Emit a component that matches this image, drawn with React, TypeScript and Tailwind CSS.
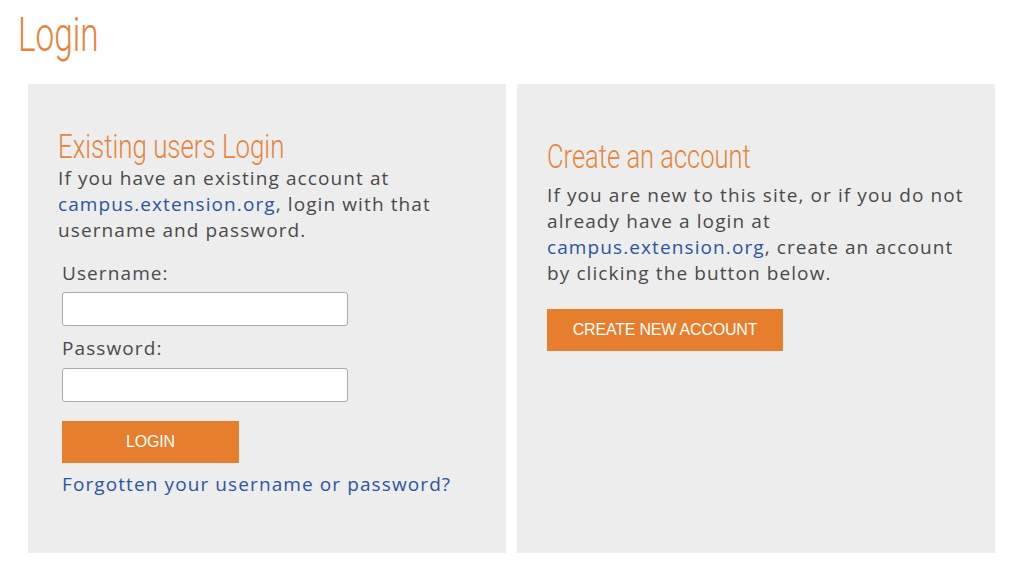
export default function App() {
  const body = "font-['Open_Sans',sans-serif] text-[19px] leading-[26px] tracking-[1.1px]";
  const headFont = "font-['Roboto',sans-serif] font-light text-[#e8833a] whitespace-nowrap";
  return (
    <div className="w-[1024px] h-[583px] bg-white overflow-hidden">
      <div className="h-[84px] pl-[18px] pt-[7px]">
        <h1 className={`${headFont} text-[49px] leading-[56px] h-[56px]`}>
          <span className="inline-block origin-left scale-x-[0.68]">Login</span>
        </h1>
      </div>
      <div className="flex gap-[11px] pl-[28px]">
        <div className="w-[478px] h-[469px] bg-[#ededed] pl-[30px] pt-[43px]">
          <h2 className={`${headFont} text-[34px] leading-[38px] h-[38px]`}>
            <span className="inline-block origin-left scale-x-[0.76]">Existing users Login</span>
          </h2>
          <p className={`${body} text-[#4a4a4a] w-[400px]`}>
            If you have an existing account at <span className="text-[#2c55a0]">campus.extension.org</span>, login with that username and password.
          </p>
          <div className="pl-[4px] pt-[17px]">
            <label className={`${body} text-[#4a4a4a] block`}>Username:</label>
            <input className="mt-[6px] block w-[286px] h-[34px] bg-white border border-[#a9a9a9] rounded-[3px]" />
            <label className={`${body} text-[#4a4a4a] block mt-[9px]`}>Password:</label>
            <input type="password" className="mt-[7px] block w-[286px] h-[34px] bg-white border border-[#a9a9a9] rounded-[3px]" />
            <button className="mt-[19px] block w-[177px] h-[42px] bg-[#e67e2e] text-white font-['Liberation_Sans',Arial,sans-serif] text-[16px] tracking-[-0.2px]">LOGIN</button>
            <p className={`${body} mt-[8px] text-[#2c55a0]`}>Forgotten your username or password?</p>
          </div>
        </div>
        <div className="w-[478px] h-[469px] bg-[#ededed] pl-[30px] pt-[53px]">
          <h2 className={`${headFont} text-[34px] leading-[38px] h-[38px]`}>
            <span className="inline-block origin-left scale-x-[0.75]">Create an account</span>
          </h2>
          <p className={`${body} text-[#4a4a4a] w-[425px] mt-[7px]`}>
            If you are new to this site, or if you do not already have a login at <span className="text-[#2c55a0]">campus.extension.org</span>, create an account by clicking the button below.
          </p>
          <button className="mt-[23px] block w-[236px] h-[42px] bg-[#e67e2e] text-white font-['Liberation_Sans',Arial,sans-serif] text-[16px] tracking-[-0.2px]">CREATE NEW ACCOUNT</button>
        </div>
      </div>
    </div>
  );
}
